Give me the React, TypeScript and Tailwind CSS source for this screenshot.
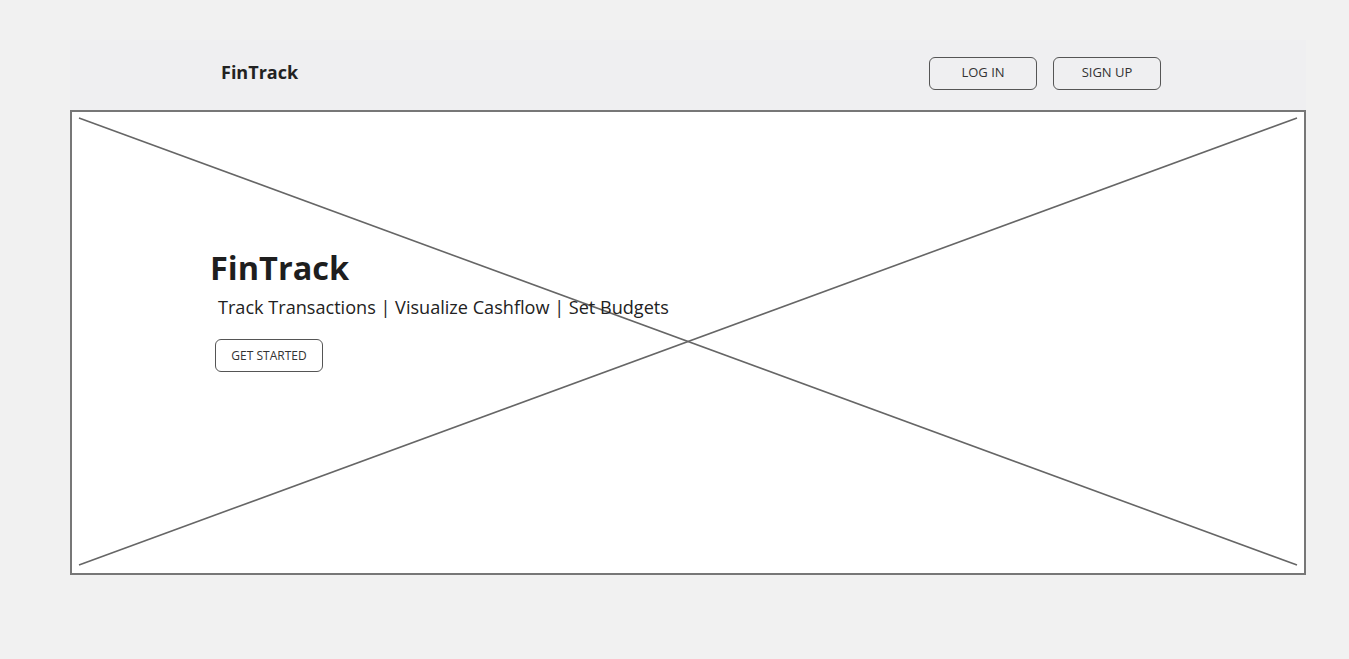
const font = { fontFamily: '"Open Sans", "Liberation Sans", sans-serif' };

const OutlineButton = ({ label, className }: { label: string; className: string }) => (
  <button
    className={`flex items-center justify-center rounded-md border border-[#555] text-[#333] ${className}`}
  >
    {label}
  </button>
);

export default function App() {
  return (
    <div className="min-h-[659px] w-full bg-[#f1f1f1] pt-[40px]" style={font}>
      <div className="ml-[70px] w-[1236px]">
        <header className="flex h-[70px] items-center justify-between bg-[#efeff1] pb-[6px] pl-[151px] pr-[145px]">
          <span className="text-[18px] font-bold text-[#222]">FinTrack</span>
          <div className="flex gap-[16px] pt-[2px]">
            <OutlineButton label="LOG IN" className="h-[33px] w-[108px] text-[13px]" />
            <OutlineButton label="SIGN UP" className="h-[33px] w-[108px] text-[13px]" />
          </div>
        </header>

        <section className="relative h-[465px] border-2 border-[#777] bg-white">
          <svg
            className="absolute inset-0 h-full w-full"
            viewBox="0 0 1232 461"
            preserveAspectRatio="none"
          >
            <line x1="7" y1="6" x2="1225" y2="453" stroke="#666" strokeWidth="1.6" />
            <line x1="1225" y1="6" x2="7" y2="453" stroke="#666" strokeWidth="1.6" />
          </svg>

          <div className="relative flex flex-col items-start pt-[133px] pl-[138px]">
            <h1 className="text-[32.5px] font-bold leading-[45px] text-[#1e1e1e]">FinTrack</h1>
            <p className="ml-[8px] mt-[4px] text-[18.1px] leading-[26px] text-[#222]">
              Track Transactions | Visualize Cashflow | Set Budgets
            </p>
            <OutlineButton
              label="GET STARTED"
              className="ml-[5px] mt-[19px] h-[33px] w-[108px] text-[12px]"
            />
          </div>
        </section>
      </div>
    </div>
  );
}
